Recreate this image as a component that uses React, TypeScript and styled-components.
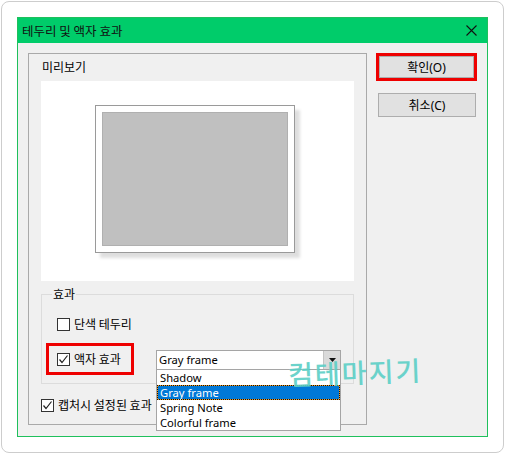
import React from "react";
import styled, { createGlobalStyle } from "styled-components";

/* css */
const GlobalStyle = createGlobalStyle`
  html, body {
    margin: 0;
    padding: 0;
    background: #ffffff;
  }
  body {
    padding: 1px;
    font-family: "Noto Sans", "Noto Sans CJK KR", sans-serif;
    font-size: 12px;
    color: #000;
  }
`;

const Card = styled.div`
  box-sizing: border-box;
  width: 503px;
  height: 452px;
  padding: 15px;
  border: 1px solid #cdcdcd;
  border-radius: 8px;
  background: #fff;
`;

const Dialog = styled.div`
  position: relative;
  box-sizing: border-box;
  width: 471px;
  height: 420px;
  border: 1px solid #1fc05c;
  background: #f0f0f0;
  display: flex;
  flex-direction: column;
`;

const TitleBar = styled.div`
  height: 25px;
  background: #00cc6a;
  display: flex;
  align-items: center;
  justify-content: space-between;
  padding: 0 10px 0 4px;
  font-family: "Noto Sans CJK KR", sans-serif;
  font-size: 12.5px;
  color: #111;
`;

const Body = styled.div`
  flex: 1;
  display: flex;
  align-items: flex-start;
  padding: 10px 0 0 10px;
  gap: 9px;
`;

const Panel = styled.div`
  box-sizing: border-box;
  width: 339px;
  height: 372px;
  border: 1px solid #a9a9a9;
  padding: 0 12px;
`;

const PanelLabel = styled.div`
  height: 27px;
  line-height: 26px;
  padding-left: 1px;
  font-family: "Noto Sans CJK KR", sans-serif;
`;

const Preview = styled.div`
  height: 200px;
  background: #fff;
  display: flex;
  align-items: center;
  justify-content: center;
`;

const Frame = styled.div`
  box-sizing: border-box;
  width: 200px;
  height: 148px;
  margin: 0 5px 5px 0;
  padding: 6px;
  border: 1px solid #9a9a9a;
  background: #fff;
  box-shadow: 5px 5px 3px rgba(0, 0, 0, 0.13);
`;

const Picture = styled.div`
  box-sizing: border-box;
  width: 100%;
  height: 100%;
  background: #c0c0c0;
  border: 1px solid #b0b0b0;
`;

const Group = styled.fieldset`
  box-sizing: border-box;
  margin: 5px 0 0 0;
  padding: 12px 4px 8px 4px;
  border: 1px solid #dcdcdc;
  min-inline-size: 0;
  display: flex;
  flex-direction: column;
  gap: 9px;
`;

const Legend = styled.legend`
  margin-left: 6px;
  padding: 0 1px;
  line-height: 16px;
  font-family: "Noto Sans CJK KR", sans-serif;
`;

const Row = styled.div<{ $indent?: number }>`
  display: flex;
  align-items: center;
  height: 20px;
  padding-left: ${(p) => p.$indent ?? 0}px;
`;

const EffectRow = styled.div`
  display: flex;
  align-items: center;
`;

const RedBox = styled.div`
  box-sizing: border-box;
  width: 88px;
  height: 32px;
  border: 3px solid #ee0000;
  padding-left: 8px;
  display: flex;
  align-items: center;
`;

const Check = styled.span`
  box-sizing: border-box;
  width: 13px;
  height: 13px;
  border: 1px solid #333;
  background: #fff;
  flex-shrink: 0;
  display: flex;
  align-items: center;
  justify-content: center;
`;

const Label = styled.span`
  margin-left: 4px;
  font-family: "Noto Sans CJK KR", sans-serif;
  white-space: nowrap;
  line-height: 16px;
`;

const Combo = styled.div`
  position: relative;
  margin-left: 22px;
  margin-top: 2px;
  font-size: 11.2px;
`;

const ComboBox = styled.div`
  box-sizing: border-box;
  width: 185px;
  height: 20px;
  border: 1px solid #a5a5a5;
  background: #fff;
  display: flex;
`;

const ComboText = styled.div`
  flex: 1;
  padding-left: 2px;
  line-height: 18px;
`;

const ComboArrow = styled.div`
  width: 16px;
  background: #dadada;
  border-left: 1px solid #c4c4c4;
  display: flex;
  align-items: center;
  justify-content: center;
`;

const List = styled.div`
  position: absolute;
  left: 0;
  top: 20px;
  box-sizing: border-box;
  width: 185px;
  border: 1px solid #a5a5a5;
  border-top: none;
  background: #fff;
  z-index: 2;
`;

const Item = styled.div<{ $active?: boolean }>`
  position: relative;
  box-sizing: border-box;
  height: 15px;
  line-height: 13px;
  padding-left: 2px;
  color: ${(p) => (p.$active ? "#fff" : "#000")};
  background: ${(p) => (p.$active ? "#0078d7" : "transparent")};
  border: 1px solid ${(p) => (p.$active ? "#f59a1b" : "transparent")};
  &::after {
    content: "";
    display: ${(p) => (p.$active ? "block" : "none")};
    position: absolute;
    inset: -1px;
    border: 1px dotted #111;
  }
`;

const BottomRow = styled.div`
  display: flex;
  align-items: center;
  height: 20px;
  margin-top: 11px;
`;

const Buttons = styled.div`
  display: flex;
  flex-direction: column;
  align-items: flex-start;
  gap: 12px;
`;

const Highlight = styled.div`
  box-sizing: border-box;
  width: 101px;
  height: 28px;
  border: 3px solid #ee0000;
  display: flex;
`;

const Button = styled.div<{ $wide?: boolean }>`
  box-sizing: border-box;
  width: ${(p) => (p.$wide ? "95px" : "98px")};
  height: ${(p) => (p.$wide ? "22px" : "24px")};
  margin-left: ${(p) => (p.$wide ? "0" : "2px")};
  border: 1px solid #adadad;
  background: #e1e1e1;
  display: flex;
  align-items: center;
  justify-content: center;
  font-family: "Noto Sans", "Noto Sans CJK KR", sans-serif;
`;

const Watermark = styled.div`
  position: absolute;
  left: 270px;
  top: 334px;
  font-family: "Noto Sans CJK KR", sans-serif;
  font-weight: 500;
  font-size: 27px;
  letter-spacing: 2px;
  color: #5ccfc6;
  opacity: 0.9;
  transform: rotate(-2deg);
  z-index: 3;
  pointer-events: none;
`;
/* css */

function CheckBox({ checked }: { checked?: boolean }) {
  return (
    <Check>
      {checked && (
        <svg width="11" height="11" viewBox="0 0 11 11">
          <path d="M1.5 5.5 L4 8.5 L9.5 1.5" stroke="#222" strokeWidth="1.2" fill="none" />
        </svg>
      )}
    </Check>
  );
}

const frames = ["Shadow", "Gray frame", "Spring Note", "Colorful frame"];

export default function App() {
  return (
    <>
      <GlobalStyle />
      <Card>
        <Dialog>
          <TitleBar>
            <span>테두리 및 액자 효과</span>
            <svg width="11" height="11" viewBox="0 0 11 11">
              <path d="M0.5 0.5 L10.5 10.5 M10.5 0.5 L0.5 10.5" stroke="#111" strokeWidth="1.1" />
            </svg>
          </TitleBar>
          <Body>
            <Panel>
              <PanelLabel>미리보기</PanelLabel>
              <Preview>
                <Frame>
                  <Picture />
                </Frame>
              </Preview>
              <Group>
                <Legend>효과</Legend>
                <Row $indent={11}>
                  <CheckBox />
                  <Label>단색 테두리</Label>
                </Row>
                <EffectRow>
                  <RedBox>
                    <CheckBox checked />
                    <Label>액자 효과</Label>
                  </RedBox>
                  <Combo>
                    <ComboBox>
                      <ComboText>Gray frame</ComboText>
                      <ComboArrow>
                        <svg width="7" height="4" viewBox="0 0 7 4">
                          <path d="M0 0 H7 L3.5 4 Z" fill="#111" />
                        </svg>
                      </ComboArrow>
                    </ComboBox>
                    <List>
                      {frames.map((f) => (
                        <Item key={f} $active={f === "Gray frame"}>
                          {f}
                        </Item>
                      ))}
                    </List>
                  </Combo>
                </EffectRow>
              </Group>
              <BottomRow>
                <CheckBox checked />
                <Label>캡처시 설정된 효과</Label>
              </BottomRow>
            </Panel>
            <Buttons>
              <Highlight>
                <Button $wide>확인(O)</Button>
              </Highlight>
              <Button>취소(C)</Button>
            </Buttons>
          </Body>
          <Watermark>컴테마지기</Watermark>
        </Dialog>
      </Card>
    </>
  );
}
